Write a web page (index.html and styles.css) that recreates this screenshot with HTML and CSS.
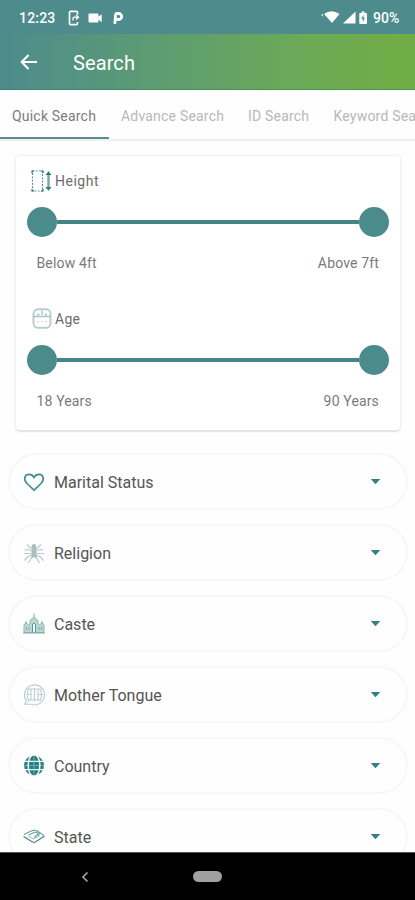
FILE: index.html
```html
<!DOCTYPE html>
<html lang="en">
<head>
<meta charset="utf-8">
<title>Search</title>
<link rel="stylesheet" href="styles.css">
</head>
<body>
<div class="phone">
  <div class="status">
    <span class="clock">12:23</span>
    <svg class="s-left" width="60" height="18" viewBox="0 0 60 18">
      <path d="M11.500 5.500V3.500q0-1.200-1.200-1.200H4.700q-1.200 0-1.200 1.200v11q0 1.200 1.200 1.200h5.600q1.200 0 1.200-1.200V13" fill="none" stroke="#fff" stroke-width="1.700"/>
      <path d="M7 11.500V9.500q0-1.300 1.300-1.300h3M10 6l2.500 2.200L10 10.500" fill="none" stroke="#fff" stroke-width="1.300"/>
      <path d="M22.500 5.500q0-1 1-1h8q1 0 1 1v2.300l3.200-2.600v8l-3.200-2.600v1.900q0 1-1 1h-8q-1 0-1-1z" fill="#fff"/>
      <path d="M48.800 14.800l.8-9.300q.1-1 1.200-1h1.900a2.900 2.900 0 0 1 0 6h-2" fill="none" stroke="#fff" stroke-width="2.800"/>
    </svg>
    <svg class="s-right" width="48" height="16" viewBox="0 0 48 16">
      <path d="M3 4Q10.500-1.500 18.500 4L11 13z" fill="#fff"/>
      <path d="M1.800 4L.8 5l1 1.200" stroke="#fff" fill="none"/>
      <path d="M22 13.500L34.500 1.500v12z" fill="#fff"/>
      <path d="M39 3h1.500V1.500h3V3h1.500q1 0 1 1v9q0 1-1 1h-6q-.700 0-.700-1V4q0-1 .700-1z" fill="#fff"/>
      <path d="M42.500 4.800l-2.200 4h1.500v3.200l2.200-4.200h-1.500z" fill="#4d8b8d"/>
    </svg>
    <span class="battery">90%</span>
  </div>
  <header class="bar">
    <svg width="18" height="16" viewBox="0 0 18 16"><path d="M17 8H2M8.500 1L1.700 8l6.800 7" fill="none" stroke="#fff" stroke-width="2.100"/></svg>
    <h1>Search</h1>
  </header>
  <nav class="tabs">
    <span class="tab active">Quick Search</span>
    <span class="tab advance">Advance Search</span>
    <span class="tab id">ID Search</span>
    <span class="tab keyword">Keyword Search</span>
  </nav>
  <main class="content">
    <section class="card">
      <div class="range">
        <div class="range-title">
          <svg width="22" height="22" viewBox="0 0 22 22">
            <rect x="1.500" y="1" width="10" height="20" fill="none" stroke="#4a8c8d" stroke-width="1.200" stroke-dasharray="1.800 1.500"/>
            <path d="M1 3V1h2M10 1h2v2M1 19v2h2M10 21h2v-2" fill="none" stroke="#247f7e" stroke-width="1.200"/>
            <path d="M17.500 3v16" stroke="#72a9a8" stroke-width="2.400"/>
            <path d="M14.500 5l3-3.800 3 3.800zM14.500 17l3 3.800 3-3.800z" fill="#247f7e"/>
          </svg>
          <span class="name height">Height</span>
        </div>
        <div class="slider"><i class="knob"></i><i class="track"></i><i class="knob"></i></div>
        <div class="limits"><span>Below 4ft</span><span>Above 7ft</span></div>
      </div>
      <div class="range">
        <div class="range-title">
          <svg width="22" height="22" viewBox="0 0 22 22">
            <rect x="2.500" y="1.300" width="17" height="18.500" rx="4.500" fill="none" stroke="#b8d0cb" stroke-width="2"/>
            <path d="M2.500 8.500h17M11 2.500V7M6 6.500h2.500M13.500 6.500H16" stroke="#a9c3bd" stroke-width="1.400"/>
            <path d="M6.500 13.500H8M10.300 13.500h1.500M14 13.500h1.500" stroke="#b5ccc7" stroke-width="1.200"/>
          </svg>
          <span class="name">Age</span>
        </div>
        <div class="slider"><i class="knob"></i><i class="track"></i><i class="knob"></i></div>
        <div class="limits"><span>18 Years</span><span>90 Years</span></div>
      </div>
    </section>
    <div class="pill">
      <svg class="icon" viewBox="0 0 22 22"><path d="M11 19.200L4 12.500C-.2 8 2 3.400 6 3.400c2.300 0 4 1.100 5 3 1-1.900 2.700-3 5-3 4 0 6.200 4.600 2 9.100z" fill="none" stroke="#45908f" stroke-width="1.700"/></svg>
      <span>Marital Status</span><i class="caret"></i>
    </div>
    <div class="pill">
      <svg class="icon" viewBox="0 0 22 22"><path d="M8 17l.5-6V6q0-4 2.500-4t2.500 4v5l.5 6-3-2z" fill="#a8bfbc"/><path d="M8.500 9L5 7.500 1.500 8M8.500 11.500H1M8.500 13l-4 2-3 3.500M13.500 9L17 7.500l3.500.5M13.500 11.500H21M13.500 13l4 2 3 3.500M8.500 7L4 2.500M13.500 7L18 2.500M9 15l-3.500 6M13 15l3.500 6" fill="none" stroke="#b8ccc9" stroke-width="1.200"/></svg>
      <span>Religion</span><i class="caret"></i>
    </div>
    <div class="pill">
      <svg class="icon" viewBox="0 0 22 22"><path d="M1 19.500V12l2-2.500L5.500 12 7 11V7.500l4-3.500 4 3.500V11l1.500 1L19 9.500l2 2.500v7.500z" fill="#bcd6d6" stroke="#8fb4b3"/><path d="M11 .5v4M3 8v3M19 8v3" stroke="#8bb0af"/><path d="M9.500 19v-8q1.500-2 3 0v8" fill="#e9fbff" stroke="#5d9899"/><path d="M3.500 14v3M6 14v3M16 14v3M18.500 14v3M0 20h22" stroke="#82aaa9"/></svg>
      <span>Caste</span><i class="caret"></i>
    </div>
    <div class="pill">
      <svg class="icon" viewBox="0 0 22 22"><path d="M3.800 17.300a10 10 0 1 1 4 2.900L1.500 20.300z" fill="none" stroke="#b9cfcd" stroke-width="1.100"/><path d="M6 4Q2.500 10.500 6 17.500M8 5v11M11.500 4v13M15 5v11M17 4.500q3 6 0 12.500M6 5h11M4 10.500h4M15 10.500h5M6 16h11" fill="none" stroke="#b9cfcd" stroke-width="1.100"/></svg>
      <span>Mother Tongue</span><i class="caret"></i>
    </div>
    <div class="pill">
      <svg class="icon" viewBox="0 0 22 22"><circle cx="11" cy="10.500" r="10" fill="#267f81"/><path d="M1 6.300h20M1 14.700h20" stroke="#eef8f8" stroke-width="1.300"/><path d="M11 0v21M1 10.500h20" stroke="#8fc0c0" stroke-width=".7"/><ellipse cx="11" cy="10.500" rx="5.800" ry="11" fill="none" stroke="#f4fafa" stroke-width="1.500"/></svg>
      <span>Country</span><i class="caret"></i>
    </div>
    <div class="pill">
      <svg class="icon" viewBox="0 0 22 22"><path d="M1 8.500l7-3.500q3-1.200 6-.2l7 4.700M6 9l5-2.500q2.500-.7 3.500.5 1 1.700-3.500 4.200M14 5q4 2 1 4.500" fill="none" stroke="#6ba3a1" stroke-width="1.100"/><path d="M.5 10.500l9 5.500q1.500.7 3 0L21.500 10" fill="none" stroke="#438c89" stroke-width="1.300"/><path d="M5.500 10l5 3 6-3.500" fill="none" stroke="#8ab6b4"/></svg>
      <span>State</span><i class="caret"></i>
    </div>
  </main>
  <footer class="navbar">
    <svg width="8" height="12" viewBox="0 0 8 12"><path d="M6.500 1.500L2 6l4.500 4.500" fill="none" stroke="#a0a0a0" stroke-width="1.700"/></svg>
    <i class="home"></i>
  </footer>
</div>
</body>
</html>
```
FILE: styles.css
```css
* { box-sizing: border-box; }
body { margin: 0; font-family: Roboto, sans-serif; background: #fefefe; }
.phone { width: 415px; height: 900px; display: flex; flex-direction: column; overflow: hidden; }
svg { display: block; flex: none; }
.status { height: 34px; flex: none; display: flex; align-items: center; background: #4d8b8d; color: #fff; font-size: 14px; font-weight: 500; padding: 2px 0 0 19px; }
.clock { width: 47px; letter-spacing: .2px; }
.s-right { margin-left: 195px; }
.battery { margin-left: 4px; }
.bar { height: 56px; flex: none; display: flex; align-items: center; padding-left: 20px; background: linear-gradient(90deg, #4d8b8d, #5c9b74 35%, #6daa55 75%, #71ad45); border-bottom: 1px solid rgba(0, 120, 60, .35); }
.bar h1 { margin: 2px 0 0 35px; color: #fff; font-size: 20px; line-height: 24px; font-weight: 400; letter-spacing: .1px; }
.tabs { height: 51px; flex: none; display: flex; white-space: nowrap; border-bottom: 2px solid #efefef; font-size: 14px; line-height: 52px; color: #b8b8b8; letter-spacing: .2px; }
.tab { flex: none; }
.active { width: 109px; height: 49px; padding-left: 12px; border-bottom: 2px solid #568f8f; color: #7b7b7b; }
.advance { margin-left: 12px; width: 127px; }
.id { width: 85.5px; }
.content { flex: 1; min-height: 0; overflow: hidden; padding: 14px 7px 0 8px; }
.card { height: 277px; margin: 0 7px 21px 7px; padding: 13px 11px 0 10.5px; border: 1px solid #f2f2f2; border-bottom: 2px solid #e5e5e5; border-radius: 5px; box-shadow: 0 0 3px rgba(0, 0, 0, .05); background: #fff; }
.range { height: 138px; }
.range-title { height: 24px; display: flex; align-items: center; padding-left: 4.5px; }
.name { margin-left: 2px; font-size: 14px; color: #6c6c6c; letter-spacing: .3px; }
.height { letter-spacing: .5px; }
.slider { display: flex; align-items: center; margin-top: 13.5px; }
.knob { width: 30px; height: 30px; border-radius: 50%; background: #4b8b8b; flex: none; }
.track { flex: 1; height: 4px; background: #448687; }
.limits { display: flex; justify-content: space-between; margin-top: 16.5px; padding: 0 10px; font-size: 14px; line-height: 20px; color: #7a7a7a; letter-spacing: .15px; }
.pill { height: 57px; margin-bottom: 14px; border: 2px solid #f7f7f7; border-radius: 29px; display: flex; align-items: center; padding: 0 25.5px 0 13px; font-size: 16px; color: #555; letter-spacing: 0; }
.pill span { margin-top: 1px; }
.icon { width: 22px; height: 22px; margin-right: 9px; }
.caret { margin-left: auto; width: 10px; height: 5.5px; background: #328083; clip-path: polygon(0 0, 100% 0, 50% 100%); }
.navbar { height: 48px; flex: none; background: #000; border-top: 1px solid #555; display: flex; align-items: center; padding-left: 81px; }
.home { width: 29px; height: 11px; margin-left: 104px; border-radius: 6px; background: #a0a0a0; }
```
